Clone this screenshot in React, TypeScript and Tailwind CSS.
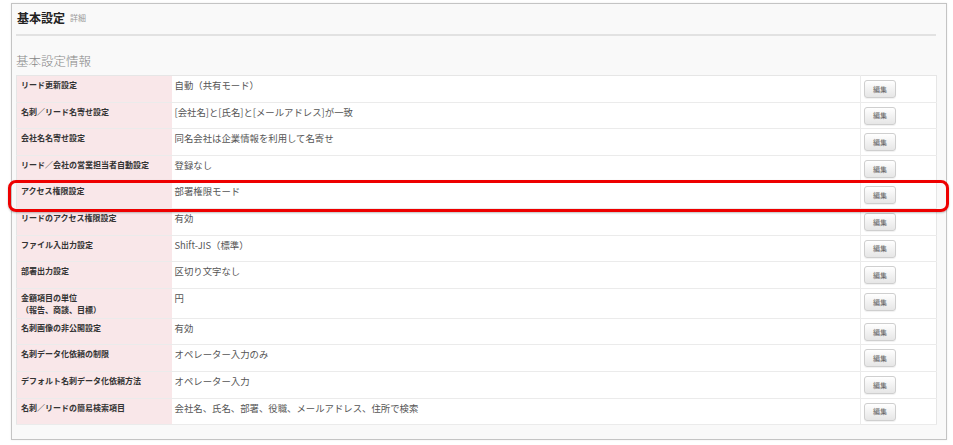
import React from "react";

const rows: { label: string[]; value: string }[] = [
  { label: ["リード更新設定"], value: "自動（共有モード）" },
  { label: ["名刺／リード名寄せ設定"], value: "[会社名]と[氏名]と[メールアドレス]が一致" },
  { label: ["会社名名寄せ設定"], value: "同名会社は企業情報を利用して名寄せ" },
  { label: ["リード／会社の営業担当者自動設定"], value: "登録なし" },
  { label: ["アクセス権限設定"], value: "部署権限モード" },
  { label: ["リードのアクセス権限設定"], value: "有効" },
  { label: ["ファイル入出力設定"], value: "Shift-JIS（標準）" },
  { label: ["部署出力設定"], value: "区切り文字なし" },
  { label: ["金額項目の単位", "（報告、商談、目標）"], value: "円" },
  { label: ["名刺画像の非公開設定"], value: "有効" },
  { label: ["名刺データ化依頼の制限"], value: "オペレーター入力のみ" },
  { label: ["デフォルト名刺データ化依頼方法"], value: "オペレーター入力" },
  { label: ["名刺／リードの簡易検索項目"], value: "会社名、氏名、部署、役職、メールアドレス、住所で検索" },
];

export default function App() {
  return (
    <div
      className="relative w-[953px] h-[445px] bg-white"
      style={{ fontFamily: '"Noto Sans CJK JP", "Noto Sans", sans-serif' }}
    >
      <div className="absolute left-[11px] top-[3px] w-[936px] h-[437px] border border-[#c4c4c4] bg-[#f9f9f9] pl-[4px] pr-[10px] shadow-[0_0_2px_rgba(0,0,0,0.08)]">
        <div className="flex items-center pt-[4px] pb-[7px] border-b-2 border-[#e2e2e2]">
          <span className="text-[12px] leading-[18px] font-bold text-[#222] pl-[1px]">基本設定</span>
          <span className="text-[8px] leading-[18px] text-[#999] ml-[5px] mt-[1px]">詳細</span>
        </div>
        <div className="mt-[17px] mb-[6px] text-[12.5px] leading-[16px] text-[#888] font-light">基本設定情報</div>
        <table className="w-[920px] border-collapse border border-[#e6e6e6] bg-white table-fixed">
          <colgroup>
            <col className="w-[155px]" />
            <col className="w-[689px]" />
            <col className="w-[76px]" />
          </colgroup>
          <tbody>
            {rows.map((r, i) => (
              <tr key={i} className="border-b border-[#ebebeb] align-top">
                <td className="bg-[#f9e7e9] pl-[4px] pt-[3px] pb-[2px] text-[8px] leading-[12px] font-bold text-[#333]">
                  {r.label.map((l, j) => (
                    <div key={j}>{l}</div>
                  ))}
                </td>
                <td className="pl-[3px] pt-[3px] pb-[2px] text-[9.4px] leading-[12px] text-[#555]">{r.value}</td>
                <td className="border-l border-[#ebebeb] pl-[3px] pt-[4px] pb-[3.6px]">
                  <div className="w-[32px] h-[18px] rounded-[3px] border border-[#cfcfcf] bg-gradient-to-b from-white to-[#e6e6e6] flex items-center justify-center text-[7px] text-[#666] shadow-[0_1px_1px_rgba(0,0,0,0.06)]">
                    編集
                  </div>
                </td>
              </tr>
            ))}
          </tbody>
        </table>
      </div>
      <div className="absolute left-[8px] top-[180px] w-[941px] h-[32px] rounded-[8px] border-[3px] border-[#ee0000] shadow-[0_1px_2px_rgba(0,0,0,0.25)]" />
    </div>
  );
}
